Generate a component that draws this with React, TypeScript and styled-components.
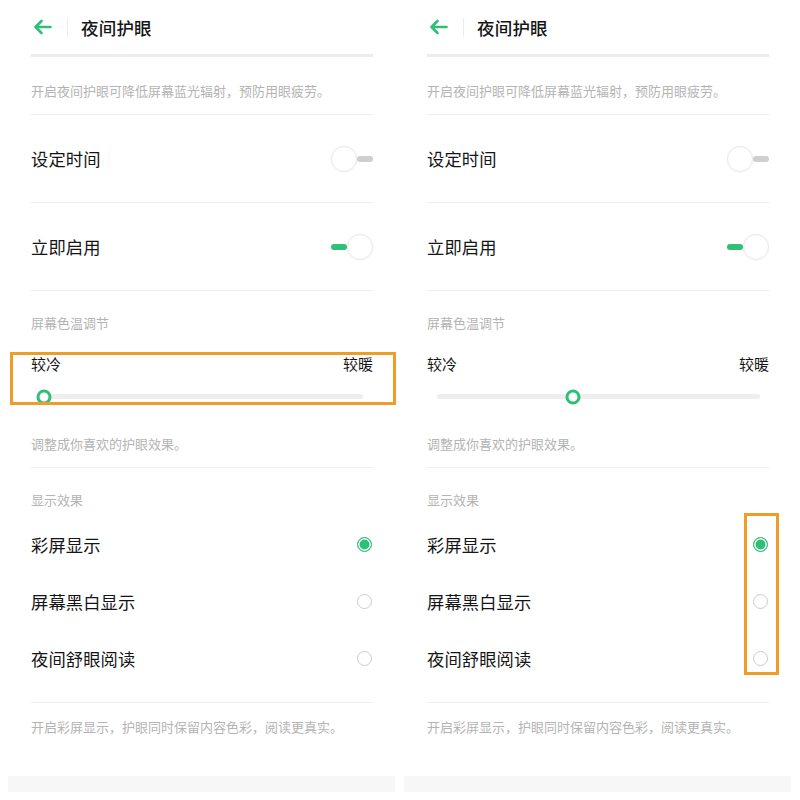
import React from 'react';
import styled, { createGlobalStyle } from 'styled-components';

const GREEN = '#2fbf76';
const GREY_TEXT = '#b4b4b4';
const LINE = '#efefef';
const ORANGE = '#ee9d26';

const GlobalStyle = createGlobalStyle`
  html, body {
    margin: 0;
    padding: 0;
    background: #ffffff;
  }
  body {
    font-family: "Noto Sans CJK SC", "Noto Sans", sans-serif;
    color: #151515;
  }
`;

const Page = styled.div`
  display: flex;
  gap: 9px;
  width: 800px;
  height: 800px;
  padding: 0 9px 0 8px;
  box-sizing: border-box;
  overflow: hidden;
`;

const Panel = styled.div`
  flex: 1;
  display: flex;
  flex-direction: column;
  background: #ffffff;
`;

const Content = styled.div`
  padding: 0 22px 0 23px;
  display: flex;
  flex-direction: column;
`;

const Header = styled.div`
  height: 57px;
  display: flex;
  align-items: center;
  border-bottom: 3px solid #ececec;
  box-sizing: border-box;
`;

const BackButton = styled.div`
  width: 22px;
  display: flex;
  align-items: center;
  margin-left: 2px;
`;

const HeaderDivider = styled.div`
  width: 1px;
  height: 19px;
  background: #ececec;
  margin: 0 13px 0 12px;
`;

const Title = styled.div`
  font-size: 17.5px;
  font-weight: 500;
  letter-spacing: 0.2px;
`;

const Note = styled.div<{ top?: number; bottom?: number; border?: boolean }>`
  font-size: 13px;
  line-height: 18px;
  color: ${GREY_TEXT};
  padding-top: ${(p) => p.top ?? 25}px;
  padding-bottom: ${(p) => p.bottom ?? 14}px;
  border-bottom: ${(p) => (p.border ? `1px solid ${LINE}` : 'none')};
`;

const Row = styled.div`
  height: 87px;
  display: flex;
  align-items: center;
  justify-content: space-between;
  border-bottom: 1px solid ${LINE};
`;

const RowLabel = styled.div`
  font-size: 17.3px;
  letter-spacing: 0.1px;
`;

const Toggle = styled.div<{ on?: boolean }>`
  display: flex;
  align-items: center;
  flex-direction: ${(p) => (p.on ? 'row' : 'row-reverse')};
`;

const ToggleTrack = styled.div<{ on?: boolean }>`
  width: 16px;
  height: 6px;
  border-radius: 3px;
  background: ${(p) => (p.on ? GREEN : '#cfcfcf')};
`;

const ToggleKnob = styled.div`
  width: 24px;
  height: 24px;
  border-radius: 50%;
  background: #ffffff;
  border: 1px solid #e9e9e9;
  box-shadow: 0 0 2px rgba(0, 0, 0, 0.05);
`;

const SliderBlock = styled.div`
  position: relative;
  padding-top: 22px;
`;

const SliderLabels = styled.div`
  display: flex;
  justify-content: space-between;
  font-size: 15px;
  line-height: 20px;
`;

const TrackArea = styled.div`
  padding-top: 20px;
`;

const Track = styled.div<{ inset: string }>`
  position: relative;
  height: 5px;
  border-radius: 3px;
  background: #eeeeee;
  margin: ${(p) => p.inset};
`;

const Thumb = styled.div`
  position: absolute;
  top: 50%;
  width: 15px;
  height: 15px;
  box-sizing: border-box;
  border-radius: 50%;
  border: 3.5px solid ${GREEN};
  background: #ffffff;
  transform: translate(-50%, -50%);
`;

const Highlight = styled.div`
  position: absolute;
  border: 3px solid ${ORANGE};
  pointer-events: none;
`;

const SliderHighlight = styled(Highlight)`
  left: -21px;
  right: -23px;
  top: 20px;
  height: 47px;
`;

const RadioList = styled.div`
  position: relative;
  margin-top: 7px;
  padding-bottom: 15px;
  border-bottom: 1px solid ${LINE};
`;

const RadioHighlight = styled(Highlight)`
  right: -10px;
  width: 29px;
  top: -3px;
  height: 156px;
`;

const RadioRow = styled.div`
  height: 57px;
  display: flex;
  align-items: center;
  justify-content: space-between;
`;

const Radio = styled.div<{ checked?: boolean }>`
  width: 15px;
  height: 15px;
  box-sizing: border-box;
  border-radius: 50%;
  margin-right: 1px;
  border: 1.5px solid ${(p) => (p.checked ? GREEN : '#cccccc')};
  background: ${(p) => (p.checked ? GREEN : '#ffffff')};
  box-shadow: ${(p) => (p.checked ? 'inset 0 0 0 1.5px #ffffff' : 'none')};
`;

const BottomBar = styled.div`
  height: 16px;
  background: #f7f7f7;
  margin-top: 40px;
`;

const BackArrow = () => (
  <svg width="19" height="16" viewBox="0 0 19 16" fill="none">
    <path
      d="M17.5 8H2.5M8.5 2L2.5 8L8.5 14"
      stroke={GREEN}
      strokeWidth="2.6"
      strokeLinecap="round"
      strokeLinejoin="round"
    />
  </svg>
);

interface PanelProps {
  thumb: number;
  trackInset: string;
  highlightSlider?: boolean;
  highlightRadios?: boolean;
}

const options = ['彩屏显示', '屏幕黑白显示', '夜间舒眼阅读'];

const NightPanel = ({ thumb, trackInset, highlightSlider, highlightRadios }: PanelProps) => (
  <Panel>
    <Content>
      <Header>
        <BackButton>
          <BackArrow />
        </BackButton>
        <HeaderDivider />
        <Title>夜间护眼</Title>
      </Header>

      <Note border>开启夜间护眼可降低屏幕蓝光辐射，预防用眼疲劳。</Note>

      <Row>
        <RowLabel>设定时间</RowLabel>
        <Toggle>
          <ToggleTrack />
          <ToggleKnob />
        </Toggle>
      </Row>
      <Row>
        <RowLabel>立即启用</RowLabel>
        <Toggle on>
          <ToggleTrack on />
          <ToggleKnob />
        </Toggle>
      </Row>

      <Note top={23} bottom={0}>屏幕色温调节</Note>

      <SliderBlock>
        <SliderLabels>
          <span>较冷</span>
          <span>较暖</span>
        </SliderLabels>
        <TrackArea>
          <Track inset={trackInset}>
            <Thumb style={{ left: `${thumb}%` }} />
          </Track>
        </TrackArea>
        {highlightSlider && <SliderHighlight />}
      </SliderBlock>

      <Note top={36} border>调整成你喜欢的护眼效果。</Note>

      <Note top={23} bottom={0}>显示效果</Note>

      <RadioList>
        {options.map((o, i) => (
          <RadioRow key={o}>
            <RowLabel>{o}</RowLabel>
            <Radio checked={i === 0} />
          </RadioRow>
        ))}
        {highlightRadios && <RadioHighlight />}
      </RadioList>

      <Note top={15} bottom={0}>开启彩屏显示，护眼同时保留内容色彩，阅读更真实。</Note>
    </Content>
    <BottomBar />
  </Panel>
);

export default function App() {
  return (
    <>
      <GlobalStyle />
      <Page>
        <NightPanel thumb={2} trackInset="0 10px 0 6px" highlightSlider />
        <NightPanel thumb={42} trackInset="0 9px 0 10px" highlightRadios />
      </Page>
    </>
  );
}
